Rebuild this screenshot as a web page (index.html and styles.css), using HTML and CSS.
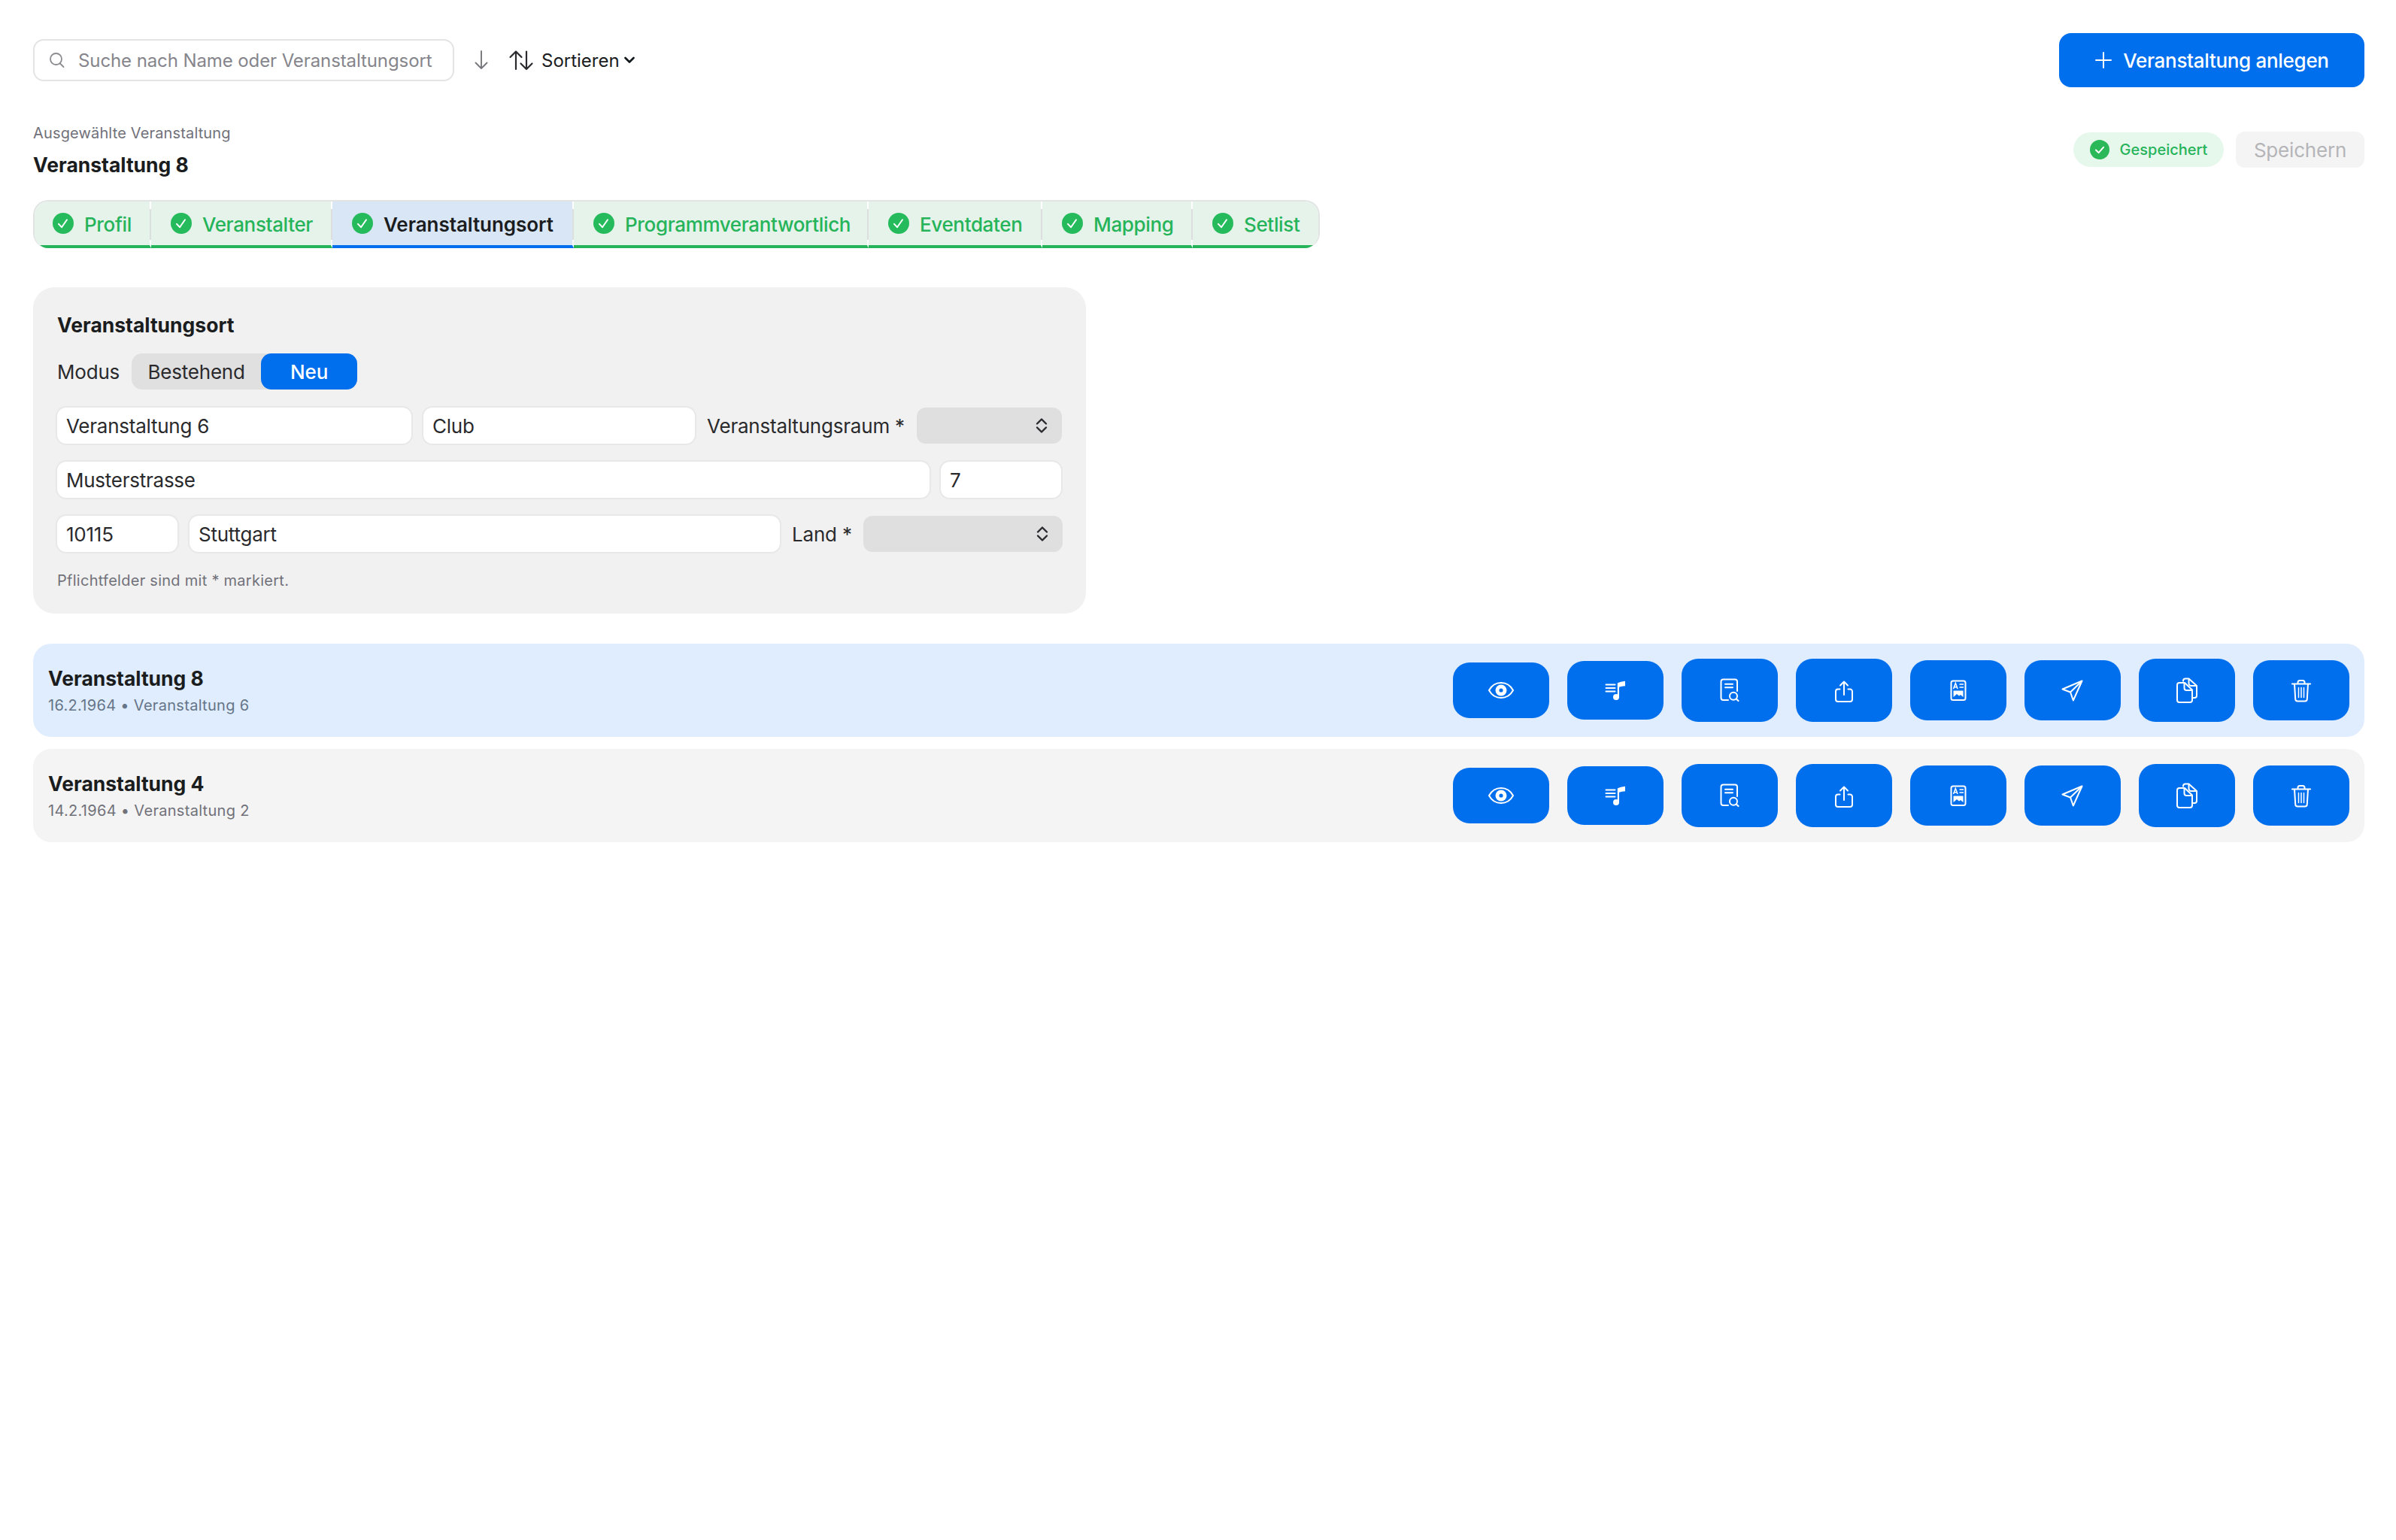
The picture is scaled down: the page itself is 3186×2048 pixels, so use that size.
FILE: index.html
```html
<!DOCTYPE html>
<html lang="de">
<head>
<meta charset="utf-8">
<title>Veranstaltungen</title>
<link rel="stylesheet" href="styles.css">
</head>
<body>
<header class="toolbar">
  <div class="tools">
    <label class="search">
      <svg class="search-icon" width="24" height="24" viewBox="0 0 24 24" fill="none" stroke="#8b8b90" stroke-width="1.8" stroke-linecap="round"><circle cx="10.500" cy="10.500" r="7.500"/><path d="M16 16.500l4.500 4.500"/></svg>
      <input class="search-input" type="text" placeholder="Suche nach Name oder Veranstaltungsort">
    </label>
    <svg class="dir-icon" width="24" height="28" viewBox="0 0 24 28" fill="none" stroke="#77777c" stroke-width="1.9" stroke-linecap="round" stroke-linejoin="round"><path d="M12 2v23M4.500 17.500l7.500 7.500 7.500-7.500"/></svg>
    <button class="sort">
      <svg width="34" height="28" viewBox="0 0 34 28" fill="none" stroke="#2a2a2e" stroke-width="2.200" stroke-linecap="round" stroke-linejoin="round"><path d="M10 26V2.500M2.500 10L10 2.500 17.500 10M24 2.500V26M16.500 18.500L24 26l7.500-7.500"/></svg>
      <span>Sortieren</span>
      <svg width="14" height="10" viewBox="0 0 14 10" fill="none" stroke="#11181c" stroke-width="2.600" stroke-linecap="round" stroke-linejoin="round"><path d="M1.500 2l5.500 5.500L12.500 2"/></svg>
    </button>
  </div>
  <button class="create">
    <svg width="24" height="24" viewBox="0 0 24 24" fill="none" stroke="#fff" stroke-width="2" stroke-linecap="round"><path d="M12 2v20M2 12h20"/></svg>
    <span>Veranstaltung anlegen</span>
  </button>
</header>

<section class="selected">
  <div class="selected-text">
    <div class="selected-label">Ausgewählte Veranstaltung</div>
    <div class="selected-name">Veranstaltung 8</div>
  </div>
  <div class="save-area">
    <span class="saved">
      <svg width="26" height="26" viewBox="0 0 26 26"><circle cx="13" cy="13" r="13" fill="#2bb858"/><path d="M8 13.500l3.600 3.600L18 9.800" fill="none" stroke="#fff" stroke-width="2" stroke-linecap="round" stroke-linejoin="round"/></svg>
      <span>Gespeichert</span>
    </span>
    <button class="save" disabled>Speichern</button>
  </div>
</section>

<svg class="sprite" width="0" height="0">
  <defs>
    <symbol id="i-check" viewBox="0 0 28 28"><circle cx="14" cy="14" r="14" fill="#25bb5c"/><path d="M8 14.800l4 4.400 7-10" fill="none" stroke="#fff" stroke-width="2" stroke-linecap="round" stroke-linejoin="round"/></symbol>
    <symbol id="i-eye" viewBox="0 0 40 40"><path d="M4 20c3.500-6.500 9-10 16-10s12.500 3.500 16 10c-3.500 6.500-9 10-16 10S7.500 26.500 4 20z" fill="none" stroke="#fff" stroke-width="2"/><circle cx="20" cy="20" r="7.500" fill="#fff"/><circle cx="20" cy="20" r="2.600" fill="#006fee"/></symbol>
    <symbol id="i-music" viewBox="0 0 40 40"><path d="M7.500 12.500h12M7.500 17h12M7.500 21.500h12" fill="none" stroke="#fff" stroke-width="2" stroke-linecap="round"/><path d="M22.800 29V10.500c3-1.500 6-2.300 10.200-2.800v6.500c-3 .2-5.500.7-8 1.500V29z" fill="#fff"/><circle cx="21" cy="29" r="4" fill="#fff"/></symbol>
    <symbol id="i-doc" viewBox="0 0 40 40"><path d="M18 33h-6.500a3 3 0 0 1-3-3V8.500a3 3 0 0 1 3-3H27a3 3 0 0 1 3 3V21" fill="none" stroke="#fff" stroke-width="2" stroke-linecap="round"/><path d="M14 11.800h10M14 16.300h10" fill="none" stroke="#fff" stroke-width="2" stroke-linecap="round"/><circle cx="25" cy="27.700" r="5" fill="none" stroke="#fff" stroke-width="2"/><path d="M28.800 31.500l2.700 2.500" fill="none" stroke="#fff" stroke-width="2.200" stroke-linecap="round"/></symbol>
    <symbol id="i-share" viewBox="0 0 40 40"><path d="M14.500 18.500H12a3 3 0 0 0-3 3V32a3 3 0 0 0 3 3h16a3 3 0 0 0 3-3V21.500a3 3 0 0 0-3-3h-2.500" fill="none" stroke="#fff" stroke-width="2" stroke-linecap="round"/><path d="M20 26V8.500M15 13.500l5-5 5 5" fill="none" stroke="#fff" stroke-width="2" stroke-linecap="round" stroke-linejoin="round"/></symbol>
    <symbol id="i-news" viewBox="0 0 40 40"><rect x="10.500" y="7.500" width="19" height="25.500" rx="2.500" fill="none" stroke="#fff" stroke-width="2"/><path d="M13.500 18l2.800-7.500L19 18M14.500 15.800h3.500M21.500 12h5.500M21.500 16h5.500" fill="none" stroke="#fff" stroke-width="1.600"/><path d="M13.500 20.500h13V29l-3.500-3-2 1.500-3-2.500-4.500 4z" fill="#fff"/></symbol>
    <symbol id="i-send" viewBox="0 0 40 40"><path d="M32.500 7.500L6.500 18.500l10.500 4 3.800 11z" fill="none" stroke="#fff" stroke-width="2" stroke-linejoin="round"/><path d="M17 22.500L32.500 7.500" fill="none" stroke="#fff" stroke-width="2"/></symbol>
    <symbol id="i-copy" viewBox="0 0 40 40"><path d="M15 8.500V7.500a3 3 0 0 1 3-3h4.500L33 14v13a3 3 0 0 1-3 3h-2" fill="none" stroke="#fff" stroke-width="2" stroke-linejoin="round"/><path d="M22.500 4.500V11a3 3 0 0 0 3 3H33" fill="none" stroke="#fff" stroke-width="2"/><path d="M10 10h7l10 9.500V33a3 3 0 0 1-3 3H10a3 3 0 0 1-3-3V13a3 3 0 0 1 3-3z" fill="none" stroke="#fff" stroke-width="2" stroke-linejoin="round"/><path d="M16.500 10.500V17a3 3 0 0 0 3 3H27" fill="none" stroke="#fff" stroke-width="2"/></symbol>
    <symbol id="i-trash" viewBox="0 0 40 40"><path d="M8 11.500h24" fill="none" stroke="#fff" stroke-width="2.200" stroke-linecap="round"/><path d="M15.500 11V9.500a2.500 2.500 0 0 1 2.500-2.500h4a2.500 2.500 0 0 1 2.500 2.500V11" fill="none" stroke="#fff" stroke-width="2"/><path d="M11 11.500l1.200 20a3 3 0 0 0 3 3h9.600a3 3 0 0 0 3-3l1.200-20" fill="none" stroke="#fff" stroke-width="2"/><path d="M16.500 16.500v13M20 16.500v13M23.500 16.500v13" fill="none" stroke="#fff" stroke-width="1.500" stroke-linecap="round"/></symbol>
  </defs>
</svg>

<nav class="tabs">
  <a class="tab w1"><svg class="chk"><use href="#i-check"/></svg><span>Profil</span></a>
  <a class="tab w2"><svg class="chk"><use href="#i-check"/></svg><span>Veranstalter</span></a>
  <a class="tab w3 active"><svg class="chk"><use href="#i-check"/></svg><span>Veranstaltungsort</span></a>
  <a class="tab w4"><svg class="chk"><use href="#i-check"/></svg><span>Programmverantwortlich</span></a>
  <a class="tab w5"><svg class="chk"><use href="#i-check"/></svg><span>Eventdaten</span></a>
  <a class="tab w6"><svg class="chk"><use href="#i-check"/></svg><span>Mapping</span></a>
  <a class="tab w7"><svg class="chk"><use href="#i-check"/></svg><span>Setlist</span></a>
</nav>

<section class="card">
  <h2 class="card-title">Veranstaltungsort</h2>
  <div class="mode">
    <span class="label">Modus</span>
    <div class="segment">
      <button class="seg seg-off">Bestehend</button>
      <button class="seg seg-on">Neu</button>
    </div>
  </div>
  <div class="form-row">
    <input class="field f-name" type="text" value="Veranstaltung 6">
    <input class="field f-type" type="text" value="Club">
    <span class="label">Veranstaltungsraum *</span>
    <div class="select f-room"><svg width="16" height="24" viewBox="0 0 16 24" fill="none" stroke="#2a2a2e" stroke-width="2.400" stroke-linecap="round" stroke-linejoin="round"><path d="M2 9.500L8 3.500l6 6M2 14.500l6 6 6-6"/></svg></div>
  </div>
  <div class="form-row">
    <input class="field f-street" type="text" value="Musterstrasse">
    <input class="field f-no" type="text" value="7">
  </div>
  <div class="form-row">
    <input class="field f-zip" type="text" value="10115">
    <input class="field f-city" type="text" value="Stuttgart">
    <span class="label">Land *</span>
    <div class="select f-land"><svg width="16" height="24" viewBox="0 0 16 24" fill="none" stroke="#2a2a2e" stroke-width="2.400" stroke-linecap="round" stroke-linejoin="round"><path d="M2 9.500L8 3.500l6 6M2 14.500l6 6 6-6"/></svg></div>
  </div>
  <p class="note">Pflichtfelder sind mit * markiert.</p>
</section>

<div class="rows">
  <article class="row row-on">
    <div class="row-text">
      <div class="row-title">Veranstaltung 8</div>
      <div class="row-sub">16.2.1964 • Veranstaltung 6</div>
    </div>
    <div class="actions">
      <button class="act h74"><svg class="ico"><use href="#i-eye"/></svg></button>
      <button class="act h78"><svg class="ico"><use href="#i-music"/></svg></button>
      <button class="act h84"><svg class="ico"><use href="#i-doc"/></svg></button>
      <button class="act h84"><svg class="ico"><use href="#i-share"/></svg></button>
      <button class="act h80"><svg class="ico"><use href="#i-news"/></svg></button>
      <button class="act h80"><svg class="ico"><use href="#i-send"/></svg></button>
      <button class="act h84"><svg class="ico"><use href="#i-copy"/></svg></button>
      <button class="act h80"><svg class="ico"><use href="#i-trash"/></svg></button>
    </div>
  </article>
  <article class="row row-off">
    <div class="row-text">
      <div class="row-title">Veranstaltung 4</div>
      <div class="row-sub">14.2.1964 • Veranstaltung 2</div>
    </div>
    <div class="actions">
      <button class="act h74"><svg class="ico"><use href="#i-eye"/></svg></button>
      <button class="act h78"><svg class="ico"><use href="#i-music"/></svg></button>
      <button class="act h84"><svg class="ico"><use href="#i-doc"/></svg></button>
      <button class="act h84"><svg class="ico"><use href="#i-share"/></svg></button>
      <button class="act h80"><svg class="ico"><use href="#i-news"/></svg></button>
      <button class="act h80"><svg class="ico"><use href="#i-send"/></svg></button>
      <button class="act h84"><svg class="ico"><use href="#i-copy"/></svg></button>
      <button class="act h80"><svg class="ico"><use href="#i-trash"/></svg></button>
    </div>
  </article>
</div>
```

FILE: styles.css
```css
* { box-sizing: border-box; }
html, body { margin: 0; background: #fff; }
body {
  padding: 44px 42px 0 44px;
  font-family: Inter, "Liberation Sans", sans-serif;
  color: #1a1c1e;
  font-size: 26px;
}
button, input { font-family: inherit; border: 0; margin: 0; }

.toolbar { display: flex; justify-content: space-between; align-items: center; height: 72px; }
.tools { display: flex; align-items: center; }
.search {
  width: 560px; height: 56px; display: flex; align-items: center;
  padding: 0 12px 0 18px; gap: 16px;
  border: 2px solid #e4e4e7; border-radius: 14px; background: #fff;
}
.search-icon { flex: none; }
.search-input { flex: 1; min-width: 0; padding: 0; font-size: 24px; letter-spacing: -0.1px; background: transparent; outline: none; color: #1a1c1e; }
.search-input::placeholder { color: #85858b; opacity: 1; }
.dir-icon { margin-left: 24px; }
.sort { display: flex; align-items: center; margin-left: 24px; padding: 0; background: none; font-size: 24px; color: #1a1c1e; }
.sort span { margin-left: 10px; margin-right: 6px; }
.create {
  width: 406px; height: 72px; border-radius: 16px; background: #006fee; color: #fff;
  font-size: 26px; font-weight: 450; letter-spacing: -0.3px; display: flex; align-items: center; justify-content: center; gap: 14px;
}

.selected { display: flex; justify-content: space-between; align-items: flex-start; margin-top: 46px; }
.selected-label { font-size: 20px; line-height: 30px; color: #71717a; letter-spacing: 0.15px; }
.selected-name { font-size: 26.5px; line-height: 36px; font-weight: 650; margin-top: 9px; }
.save-area { display: flex; align-items: center; gap: 16px; margin-top: 13px; }
.saved {
  height: 46px; width: 200px; border-radius: 23px; background: #e6f7ec; color: #25b45a;
  display: flex; align-items: center; justify-content: center; gap: 14px; font-size: 20px; font-weight: 500;
}
.save { width: 171px; height: 48px; border-radius: 12px; background: #f4f4f5; color: #b5b5b8; font-size: 26px; letter-spacing: -0.2px; }

.sprite { position: absolute; }

.tabs {
  display: flex; margin-top: 29px; height: 64px; width: 1711px;
  border: 2px solid #e2e4e4; border-bottom: 0; border-radius: 20px; overflow: hidden;
}
.tab {
  position: relative; display: flex; align-items: center; gap: 14px; padding-left: 26px; padding-top: 2px;
  height: 100%; background: #e6f3ea; color: #25b45a; font-size: 26px; font-weight: 450; letter-spacing: -0.35px;
  border-bottom: 4px solid #25b45a; border-right: 2px solid #fff; flex: none;
}
.tab::after {
  content: ""; position: absolute; right: -2px; top: 10px; bottom: 7px; width: 2px; background: #dcdfdd;
}
.tab:first-child { padding-left: 24px; }
.tab:last-child { border-right: 0; }
.tab:last-child::after { display: none; }
.tab.active { background: #d9e6f6; color: #1a1c1e; font-weight: 600; letter-spacing: -0.05px; border-bottom-color: #006fee; }
.w1 { width: 155px; }
.w2 { width: 241px; }
.w3 { width: 321px; }
.w4 { width: 392px; }
.w5 { width: 231px; }
.w6 { width: 200px; }
.w7 { flex: 1; }
.chk { width: 28px; height: 28px; flex: none; margin-top: -2px; }

.card {
  width: 1400px; height: 434px; margin-top: 52px; padding: 32px; background: #f1f1f1; border-radius: 28px;
}
.card-title { margin: 0; font-size: 26.5px; line-height: 36px; font-weight: 650; }
.mode { display: flex; align-items: center; gap: 16px; margin-top: 20px; }
.label { font-size: 26px; white-space: nowrap; color: #2a2a2d; letter-spacing: -0.2px; }
.segment { display: flex; height: 48px; border-radius: 14px; background: #e0e0e0; }
.seg { height: 48px; padding: 0; font-size: 26px; border-radius: 14px; letter-spacing: -0.2px; }
.seg-off { width: 172px; background: none; color: #2a2a2d; }
.seg-on { width: 128px; background: #006fee; color: #fff; font-weight: 450; }
.form-row { display: flex; align-items: center; gap: 16px; margin-top: 24px; }
.field {
  height: 48px; padding: 0 12px; font-size: 26px; letter-spacing: -0.25px; color: #2a2a2d; background: #fff;
  border-radius: 12px; box-shadow: 0 0 0 2px #e8e8e8; outline: none; flex: none;
}
.select { height: 48px; border-radius: 12px; background: #dfdfdf; display: flex; align-items: center; justify-content: flex-end; padding-right: 19px; flex: none; }
.f-name { width: 471px; }
.f-type { width: 361px; }
.f-room { width: 193px; }
.f-street { width: 1160px; }
.f-no { width: 160px; margin-left: -1px; }
.f-zip { width: 160px; }
.f-city { width: 785px; }
.f-land { width: 265px; margin-left: -1px; }
.note { margin: 23px 0 0; font-size: 20px; line-height: 30px; color: #71717a; letter-spacing: 0.27px; }

.rows { display: flex; flex-direction: column; gap: 16px; margin-top: 40px; }
.row { display: flex; align-items: center; justify-content: space-between; height: 124px; padding: 20px; border-radius: 24px; }
.row-on { background: #dfedff; }
.row-off { background: #f4f4f4; }
.row-title { font-size: 26.5px; line-height: 36px; font-weight: 650; }
.row-sub { font-size: 20px; line-height: 28px; margin-top: 4px; letter-spacing: 0.3px; }
.row-on .row-sub { color: #667587; }
.row-off .row-sub { color: #71717a; }
.actions { display: flex; align-items: center; gap: 24px; }
.act { width: 128px; display: flex; align-items: center; justify-content: center; padding: 0; background: #006fee; border-radius: 22px; }
.h74 { height: 74px; }
.h78 { height: 78px; }
.h80 { height: 80px; }
.h84 { height: 84px; }
.ico { width: 40px; height: 40px; display: block; }
```
